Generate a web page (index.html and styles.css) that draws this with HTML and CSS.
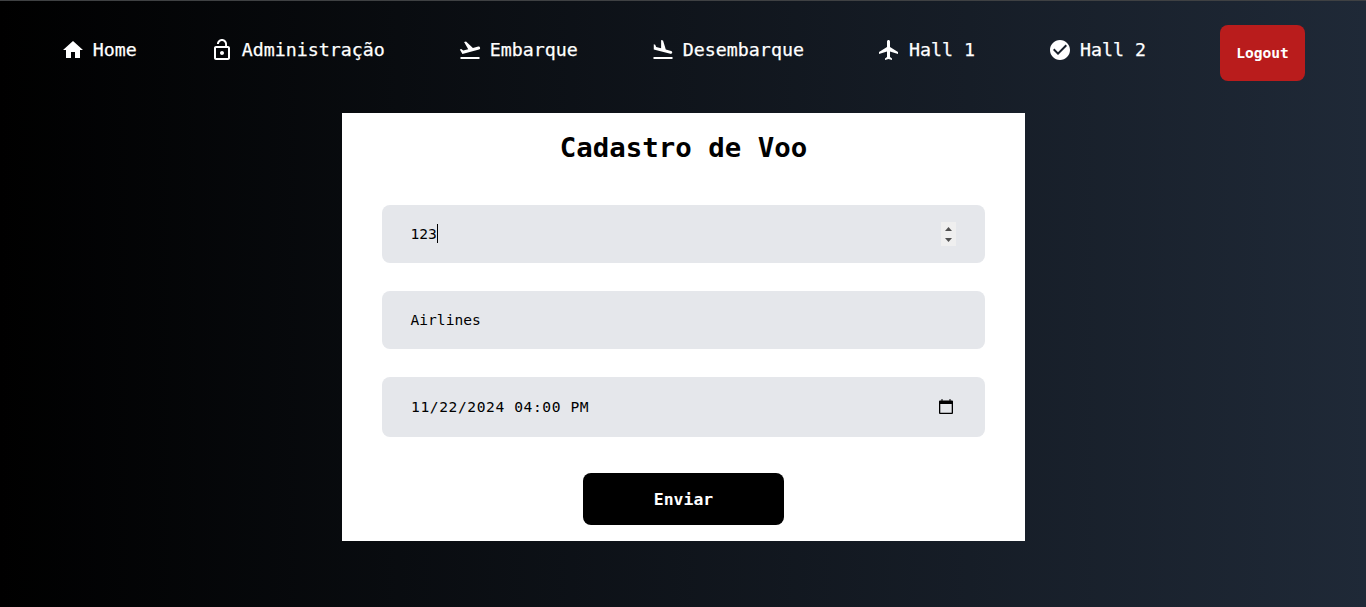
FILE: index.html
```html
<!DOCTYPE html>
<html lang="pt-BR">
<head>
<meta charset="utf-8">
<title>Cadastro de Voo</title>
<link rel="stylesheet" href="styles.css">
</head>
<body>
<header class="topbar">
  <nav class="nav">
    <a class="nav-item"><svg class="icon" viewBox="0 0 24 24"><path d="M10 20v-6h4v6h5v-8h3L12 3 2 12h3v8z"/></svg><span>Home</span></a>
    <a class="nav-item"><svg class="icon" viewBox="0 0 24 24"><path d="M12 17c1.1 0 2-.9 2-2s-.9-2-2-2-2 .9-2 2 .9 2 2 2zm6-9h-1V6c0-2.760-2.240-5-5-5S7 3.240 7 6h1.900c0-1.710 1.390-3.100 3.100-3.100s3.100 1.390 3.100 3.100v2H6c-1.100 0-2 .9-2 2v10c0 1.100.9 2 2 2h12c1.100 0 2-.9 2-2V10c0-1.100-.9-2-2-2zm0 12H6V10h12v10z"/></svg><span>Administração</span></a>
    <a class="nav-item"><svg class="icon" viewBox="0 0 24 24"><path d="M2.500 19h19v2h-19zm19.570-9.360c-.21-.8-1.040-1.280-1.840-1.060L14.920 10l-6.900-6.430-1.930.51 4.140 7.170-4.970 1.330-1.970-1.540-1.450.39 2.590 4.490L21 11.490c.81-.23 1.280-1.050 1.070-1.850z"/></svg><span>Embarque</span></a>
    <a class="nav-item"><svg class="icon" viewBox="0 0 24 24"><path d="M2.500 19h19v2h-19zm16.840-3.150c.8.21 1.620-.26 1.840-1.060.21-.8-.26-1.620-1.060-1.840l-5.310-1.420-2.760-9.020L10.120 2v8.280L5.150 8.950l-.93-2.320-1.450-.39v5.170l16.570 4.440z"/></svg><span>Desembarque</span></a>
    <a class="nav-item"><svg class="icon" viewBox="0 0 24 24"><path d="M21 16v-2l-8-5V3.500c0-.83-.67-1.500-1.500-1.500S10 2.670 10 3.500V9l-8 5v2l8-2.500V19l-2 1.500V22l3.500-1 3.500 1v-1.500L13 19v-5.500z"/></svg><span>Hall 1</span></a>
    <a class="nav-item"><svg class="icon" viewBox="0 0 24 24"><path d="M12 2C6.480 2 2 6.480 2 12s4.480 10 10 10 10-4.480 10-10S17.520 2 12 2zm-2 15l-5-5 1.410-1.410L10 14.170l7.590-7.590L19 8l-9 9z"/></svg><span>Hall 2</span></a>
  </nav>
  <button class="logout">Logout</button>
</header>
<main class="card">
  <h1 class="title">Cadastro de Voo</h1>
  <form class="form">
    <div class="field">
      <span class="value">123</span><i class="caret"></i>
      <svg class="spinner" viewBox="0 0 15 24"><path d="M4 9h7L7.500 5zM4 16h7l-3.500 4z"/></svg>
    </div>
    <div class="field"><span class="value">Airlines</span></div>
    <div class="field field-date">
      <span class="value">11/22/2024 04:00 PM</span>
      <svg class="calendar" viewBox="0 0 14 15"><path d="M2.500 0h1v1.500h7V0h1v1.500H13q1 0 1 1V14q0 1-1 1H1q-1 0-1-1V2.500q0-1 1-1h1.500zM1.300 5v8.700h11.400V5z"/></svg>
    </div>
    <button class="submit" type="button">Enviar</button>
  </form>
</main>
</body>
</html>
```
FILE: styles.css
```css
* { box-sizing: border-box; }
body {
  margin: 0;
  height: 607px;
  overflow: hidden;
  border-top: 1px solid #3f4143;
  background: linear-gradient(to right, #000, #1f2937);
  font-family: "DejaVu Sans Mono", "Liberation Mono", monospace;
}
button { border: 0; color: #fff; font-family: inherit; font-weight: 700; }
.topbar {
  display: flex;
  justify-content: space-between;
  align-items: flex-start;
  padding: 24px 61px 0;
}
.nav { display: flex; gap: 73.3px; padding-top: 13px; }
.nav-item {
  display: flex;
  align-items: center;
  gap: 7.7px;
  height: 24px;
  color: #fff;
  font-size: 18.29px;
  line-height: 24px;
  white-space: pre;
  -webkit-text-stroke: 0.25px #fff;
}
.icon { width: 24px; height: 24px; fill: #fff; }
.logout {
  width: 85px;
  height: 56px;
  padding: 0 0 2px;
  border-radius: 8px;
  background: #b91c1c;
  font-size: 14.6px;
}
.card {
  width: 683px;
  height: 428px;
  margin: 32px auto 0 342px;
  padding: 17px 40px 16px;
  background: #fff;
}
.title {
  margin: 0 0 39px;
  color: #000;
  font-size: 27.4px;
  line-height: 36px;
  text-align: center;
}
.form { display: flex; flex-direction: column; gap: 28px; }
.field {
  display: flex;
  align-items: center;
  height: 58px;
  padding: 0 29px 0 28.5px;
  border-radius: 8px;
  background: #e5e7eb;
  color: #000;
  font-size: 14.6px;
}
.value { padding-bottom: 2px; }
.field-date { height: 60px; padding: 0 32px 0 29px; }
.field-date .value { letter-spacing: 0.59px; }
.caret { width: 1px; height: 19px; margin-bottom: 1px; background: #000; }
.spinner { width: 15px; height: 24px; margin-left: auto; background: #efefef; fill: #505050; }
.calendar { width: 14px; height: 15px; margin: 0 0 2px auto; fill: #000; }
.submit {
  align-self: center;
  width: 201px;
  height: 52px;
  margin-top: 8px;
  border-radius: 8px;
  background: #000;
  font-size: 16.44px;
}
```
